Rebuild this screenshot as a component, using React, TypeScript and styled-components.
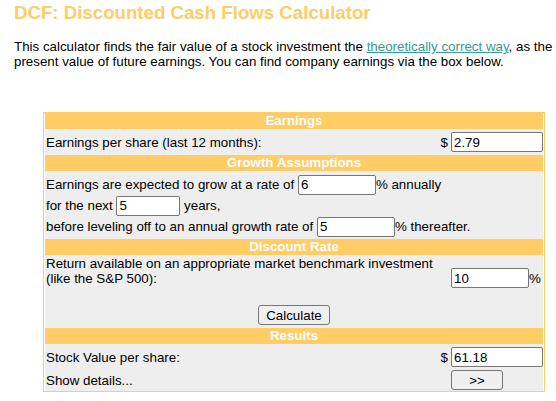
import React, { useState } from 'react';
import styled, { createGlobalStyle } from 'styled-components';

const GlobalStyle = createGlobalStyle`
  body {
    margin: 0;
    background: #ffffff;
    font-family: 'Liberation Sans', Arial, sans-serif;
    color: #000000;
  }
`;

const Page = styled.div`
  padding: 2px 0 0 14px;
`;

const Title = styled.h1`
  margin: 0;
  font-size: 14pt;
  font-weight: bold;
  color: #ffcc66;
`;

const Intro = styled.p`
  margin: 15px 0 0;
  font-size: 10pt;
`;

const Link = styled.a`
  color: #339999;
  text-decoration: underline;
`;

const Calculator = styled.div`
  width: 502px;
  box-sizing: border-box;
  margin: 43px 0 0 29px;
  border: 1px solid #ffcc66;
  padding: 0 1px;
  background: #ffffff;
  font-size: 10pt;
`;

const SectionHeader = styled.div`
  height: 16px;
  line-height: 16px;
  background: #ffcc66;
  color: #ffffff;
  font-weight: bold;
  text-align: center;
`;

const FieldRow = styled.div<{ $pad?: string; $height?: number }>`
  display: grid;
  grid-template-columns: 1fr 93px;
  align-items: center;
  background: #eeeeee;
  padding: ${(p) => p.$pad || '0'};
  min-height: ${(p) => (p.$height ? `${p.$height}px` : 'auto')};
  box-sizing: border-box;
`;

const Label = styled.div<{ $top?: boolean }>`
  display: flex;
  justify-content: space-between;
  align-self: ${(p) => (p.$top ? 'start' : 'center')};
  padding: 0 2px 0 1px;
`;

const ValueCell = styled.div`
  display: flex;
  align-items: center;
  padding-left: 1px;
`;

const TextInput = styled.input<{ $w: number }>`
  width: ${(p) => p.$w}px;
  height: 20px;
  box-sizing: border-box;
  margin: 0;
  padding: 1px 2px;
  border: 1px solid #767676;
  border-radius: 2px;
  background: #ffffff;
  font-family: 'Liberation Sans', Arial, sans-serif;
  font-size: 10pt;
  color: #000000;
`;

const Button = styled.button<{ $w: number }>`
  width: ${(p) => p.$w}px;
  height: 20px;
  margin: 0;
  padding: 0;
  border: 1px solid #767676;
  border-radius: 3px;
  background: #efefef;
  font-family: 'Liberation Sans', Arial, sans-serif;
  font-size: 10pt;
  color: #000000;
`;

const GrowthBlock = styled.div`
  background: #eeeeee;
  padding: 3px 1px 2px;
`;

const GrowthLine = styled.div`
  height: 21px;
  display: flex;
  align-items: center;
  white-space: pre;
`;

const CalcRow = styled.div`
  background: #eeeeee;
  display: flex;
  justify-content: center;
  padding: 5px 0 3px;
`;

export default function App() {
  const [eps, setEps] = useState('2.79');
  const [growth, setGrowth] = useState('6');
  const [years, setYears] = useState('5');
  const [terminal, setTerminal] = useState('5');
  const [discount, setDiscount] = useState('10');
  const [value, setValue] = useState('61.18');

  return (
    <Page>
      <GlobalStyle />
      <Title>DCF: Discounted Cash Flows Calculator</Title>
      <Intro>
        This calculator finds the fair value of a stock investment the{' '}
        <Link href="#">theoretically correct way</Link>, as the present value of future earnings.
        You can find company earnings via the box below.
      </Intro>

      <Calculator>
        <SectionHeader>Earnings</SectionHeader>
        <FieldRow $height={26}>
          <Label>
            <span>Earnings per share (last 12 months):</span>
            <span>$</span>
          </Label>
          <ValueCell>
            <TextInput $w={92} value={eps} onChange={(e) => setEps(e.target.value)} />
          </ValueCell>
        </FieldRow>

        <SectionHeader>Growth Assumptions</SectionHeader>
        <GrowthBlock>
          <GrowthLine>
            {'Earnings are expected to grow at a rate of '}
            <TextInput $w={78} value={growth} onChange={(e) => setGrowth(e.target.value)} />
            {'% annually'}
          </GrowthLine>
          <GrowthLine>
            {'for the next '}
            <TextInput $w={64} value={years} onChange={(e) => setYears(e.target.value)} />
            {' years,'}
          </GrowthLine>
          <GrowthLine>
            {'before leveling off to an annual growth rate of '}
            <TextInput $w={78} value={terminal} onChange={(e) => setTerminal(e.target.value)} />
            {'% thereafter.'}
          </GrowthLine>
        </GrowthBlock>

        <SectionHeader>Discount Rate</SectionHeader>
        <FieldRow $height={45} $pad="1px 0 0">
          <Label $top>
            <span>Return available on an appropriate market benchmark investment (like the S&amp;P 500):</span>
          </Label>
          <ValueCell>
            <TextInput $w={78} value={discount} onChange={(e) => setDiscount(e.target.value)} />
            %
          </ValueCell>
        </FieldRow>
        <CalcRow>
          <Button $w={72}>Calculate</Button>
        </CalcRow>

        <SectionHeader>Results</SectionHeader>
        <FieldRow $pad="3px 0 2px">
          <Label>
            <span>Stock Value per share:</span>
            <span>$</span>
          </Label>
          <ValueCell>
            <TextInput $w={92} value={value} onChange={(e) => setValue(e.target.value)} />
          </ValueCell>
        </FieldRow>
        <FieldRow $pad="1px 0 1px">
          <Label>
            <span>Show details...</span>
          </Label>
          <ValueCell>
            <Button $w={52}>&gt;&gt;</Button>
          </ValueCell>
        </FieldRow>
      </Calculator>
    </Page>
  );
}
